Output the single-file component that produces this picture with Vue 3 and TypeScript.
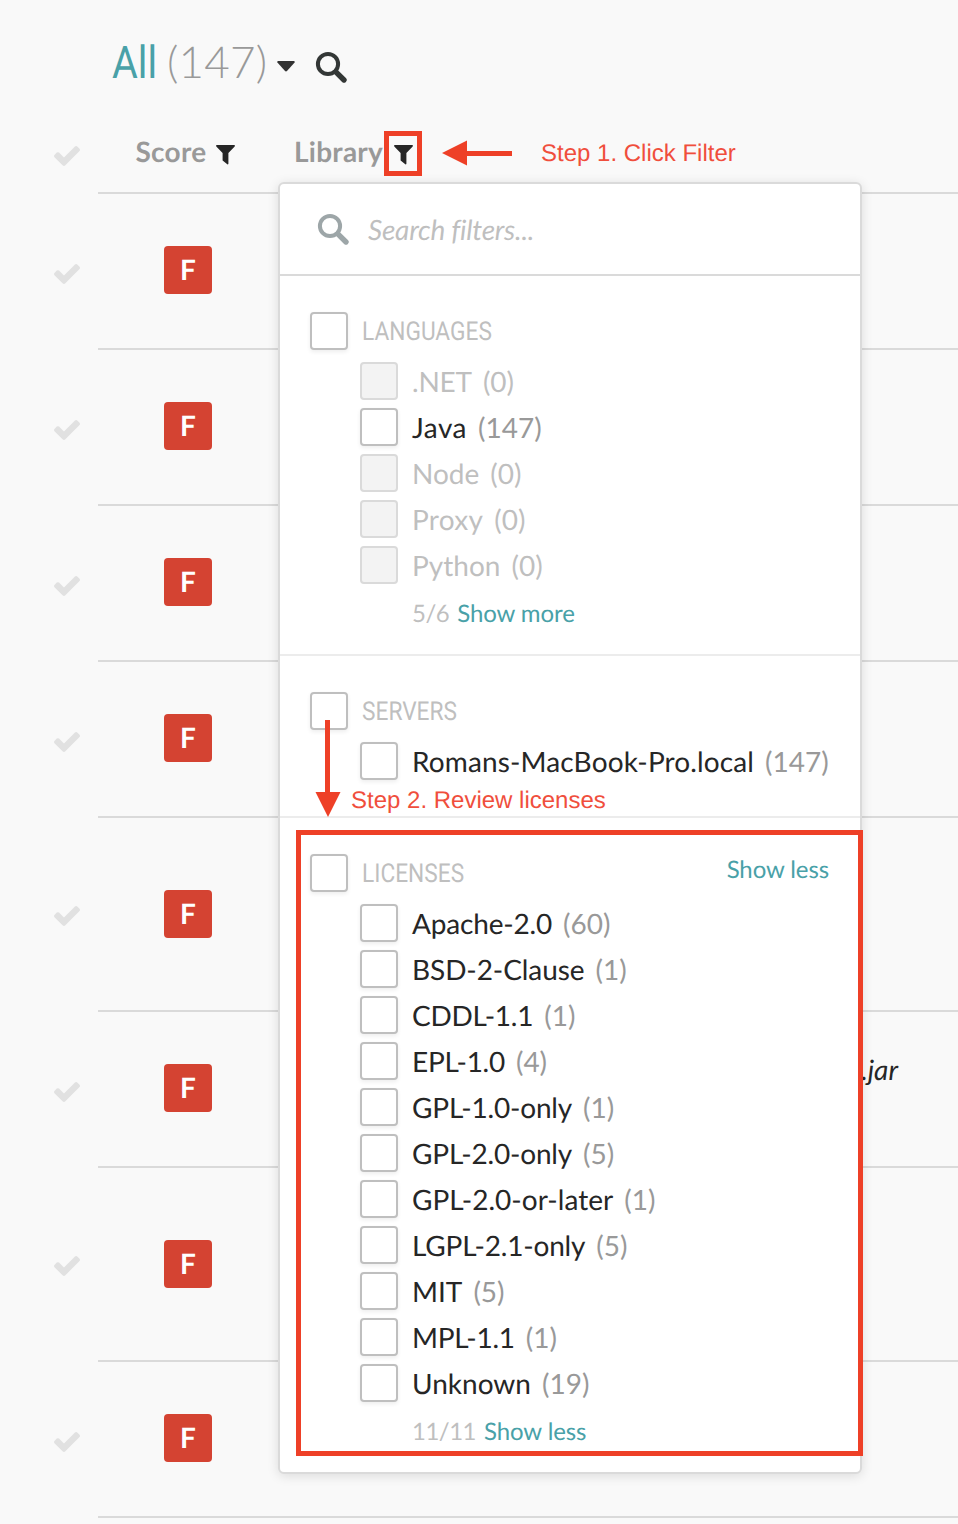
<script setup lang="ts">
interface FilterItem {
  name: string
  count: number
  tracking?: number
}
interface FilterGroup {
  title: string
  items: FilterItem[]
  tally?: string
  toggle?: string
  corner?: string
}
interface Row {
  grade: string
  tall: boolean
  file?: string
}

const groups: FilterGroup[] = [
  {
    title: 'LANGUAGES',
    items: [
      { name: '.NET', count: 0, tracking: -0.2 },
      { name: 'Java', count: 147, tracking: 0.5 },
      { name: 'Node', count: 0 },
      { name: 'Proxy', count: 0, tracking: 0.3 },
      { name: 'Python', count: 0 },
    ],
    tally: '5/6',
    toggle: 'Show more',
  },
  { title: 'SERVERS', items: [{ name: 'Romans-MacBook-Pro.local', count: 147, tracking: 0.13 }] },
  {
    title: 'LICENSES',
    items: [
      { name: 'Apache-2.0', count: 60, tracking: -0.17 },
      { name: 'BSD-2-Clause', count: 1, tracking: -0.08 },
      { name: 'CDDL-1.1', count: 1, tracking: -0.25 },
      { name: 'EPL-1.0', count: 4, tracking: -0.28 },
      { name: 'GPL-1.0-only', count: 1, tracking: -0.17 },
      { name: 'GPL-2.0-only', count: 5, tracking: -0.17 },
      { name: 'GPL-2.0-or-later', count: 1, tracking: 0.03 },
      { name: 'LGPL-2.1-only', count: 5, tracking: -0.17 },
      { name: 'MIT', count: 5 },
      { name: 'MPL-1.1', count: 1, tracking: -0.28 },
      { name: 'Unknown', count: 19 },
    ],
    tally: '11/11',
    toggle: 'Show less',
    corner: 'Show less',
  },
]

const rows: Row[] = [
  { grade: 'F', tall: false },
  { grade: 'F', tall: false },
  { grade: 'F', tall: false },
  { grade: 'F', tall: false },
  { grade: 'F', tall: true },
  { grade: 'F', tall: false, file: '.jar' },
  { grade: 'F', tall: true },
  { grade: 'F', tall: false },
]
</script>

<template>
  <div class="page">
    <header class="title">
      <span class="title-name"><span class="squeeze">All</span></span>
      <span class="title-count">(147)</span>
      <svg class="caret" viewBox="0 0 18 11"><path d="M1 0h16q1.4.5.6 1.6l-7.4 8.2q-1.2 1.2-2.4 0L.4 1.6Q-.4.5 1 0z" /></svg>
      <svg class="glass" viewBox="0 0 31 31">
        <circle cx="12" cy="12" r="10.1" />
        <path d="M19.8 19.8L28 28" />
      </svg>
    </header>

    <div class="columns">
      <svg class="tick" viewBox="121 270 1550 1252"><path d="M1671 566q0 40-28 68l-724 724-136 136q-28 28-68 28t-68-28l-136-136-362-362q-28-28-28-68t28-68l136-136q28-28 68-28t68 28l294 295 656-657q28-28 68-28t68 28l136 136q28 28 28 68z" /></svg>
      <div class="columns-line">
        <span class="col-name score">Score</span>
        <svg class="funnel" viewBox="0 0 19 20"><path d="M.6 0h17.8q.9.5.3 1.4L12.4 8v10.8q-.3.9-1.1.5L6.6 15.6V8L.3 1.4Q-.3.5.6 0z" /></svg>
        <span class="col-name library">Library</span>
        <svg class="funnel second" viewBox="0 0 19 20"><path d="M.6 0h17.8q.9.5.3 1.4L12.4 8v10.8q-.3.9-1.1.5L6.6 15.6V8L.3 1.4Q-.3.5.6 0z" /></svg>
      </div>
    </div>

    <div v-for="(row, i) in rows" :key="i" class="row" :class="{ tall: row.tall }">
      <svg class="tick" viewBox="121 270 1550 1252"><path d="M1671 566q0 40-28 68l-724 724-136 136q-28 28-68 28t-68-28l-136-136-362-362q-28-28-28-68t28-68l136-136q28-28 68-28t68 28l294 295 656-657q28-28 68-28t68 28l136 136q28 28 28 68z" /></svg>
      <div class="row-body">
        <span class="grade">{{ row.grade }}</span>
        <span v-if="row.file" class="file">{{ row.file }}</span>
      </div>
    </div>

    <section class="panel">
      <div class="search">
        <svg class="glass" viewBox="0 0 31 31">
          <circle cx="12" cy="12" r="10.1" />
          <path d="M19.8 19.8L28 28" />
        </svg>
        <span class="placeholder">Search filters...</span>
      </div>
      <div v-for="g in groups" :key="g.title" class="group">
        <div class="group-head">
          <span class="box"></span>
          <span class="group-title">{{ g.title }}</span>
          <a v-if="g.corner" class="link corner">{{ g.corner }}</a>
        </div>
        <div class="items">
          <div v-for="item in g.items" :key="item.name" class="item" :class="{ off: item.count === 0 }">
            <span class="box"></span>
            <span class="name" :style="{ letterSpacing: (item.tracking ?? 0) + 'px' }">{{ item.name }}</span>
            <span class="count">({{ item.count }})</span>
          </div>
        </div>
        <div v-if="g.tally" class="more">
          <span class="tally">{{ g.tally }}</span>
          <a class="link">{{ g.toggle }}</a>
        </div>
      </div>
    </section>

    <div class="mark mark-filter"></div>
    <div class="mark mark-licenses"></div>
    <svg class="arrow arrow-left" viewBox="0 0 70 26"><path d="M0 13L25 .5V11H70V16H25V25.5z" /></svg>
    <svg class="arrow arrow-down" viewBox="0 0 26 97"><path d="M13 97L.5 72H10V0H15V72H25.5z" /></svg>
    <span class="note note-one">Step 1. Click Filter</span>
    <span class="note note-two">Step 2. Review licenses</span>
  </div>
</template>

<style>
body {
  margin: 0;
  background: #f9f9f9;
}
</style>

<style scoped>
.page {
  position: relative;
  width: 958px;
  height: 1524px;
  overflow: hidden;
  background: #f9f9f9;
  font-family: Lato, "Liberation Sans", sans-serif;
  font-size: 28px;
  color: #262626;
  white-space: nowrap;
  text-rendering: geometricPrecision;
}
.page * {
  box-sizing: border-box;
}
svg {
  display: block;
  flex: none;
  overflow: visible;
}
.title {
  display: flex;
  align-items: center;
  height: 118px;
  padding: 8px 0 0 112px;
}
.title-name {
  width: 55px;
  font: 400 45px/54px Roboto, sans-serif;
  color: #49a1a8;
}
.squeeze {
  display: inline-block;
  transform: scaleX(0.88);
  transform-origin: 0 50%;
}
.title-count {
  width: 110px;
  margin-top: -2px;
  font-size: 44px;
  line-height: 54px;
  font-weight: 300;
  letter-spacing: 0.2px;
  color: #999;
}
.caret {
  width: 18px;
  height: 11px;
  margin-top: 7px;
  fill: #333;
}
.glass {
  width: 31px;
  height: 31px;
  fill: none;
  stroke: #333736;
  stroke-width: 4;
}
.glass path {
  stroke-width: 5.4;
  stroke-linecap: round;
}
.title .glass {
  margin: 9px 0 0 21px;
}
.tick {
  width: 26px;
  height: 21px;
  fill: #e1e1e1;
}
.columns {
  display: flex;
  height: 76px;
  padding-left: 54px;
}
.columns .tick {
  margin-top: 27px;
}
.columns-line {
  display: flex;
  align-items: center;
  width: 860px;
  margin-left: 18px;
  padding-bottom: 4px;
  border-bottom: 2px solid #dadada;
}
.col-name {
  margin-top: -5px;
  font-weight: 700;
  letter-spacing: 0.27px;
  color: #999;
}
.score {
  padding-left: 37.5px;
  width: 118px;
}
.library {
  width: 100px;
  margin-left: 59px;
}
.funnel {
  width: 19px;
  height: 20px;
  margin-top: 3px;
  fill: #262626;
}
.row {
  display: flex;
  height: 156px;
  padding-left: 54px;
}
.row .tick {
  margin-top: 69px;
}
.row-body {
  display: flex;
  justify-content: space-between;
  width: 860px;
  margin-left: 18px;
  padding: 52px 60px 0 66px;
  border-bottom: 2px solid #dadada;
}
.row.tall {
  height: 194px;
}
.tall .tick {
  margin-top: 87px;
}
.tall .row-body {
  padding-top: 72px;
}
.grade {
  width: 48px;
  height: 48px;
  border-radius: 4px;
  background: #d44332;
  color: #fff;
  font-weight: 700;
  line-height: 47px;
  text-align: center;
}
.file {
  margin-top: -12px;
  line-height: 34px;
  font-style: italic;
}
.panel {
  position: absolute;
  left: 278px;
  top: 182px;
  width: 584px;
  height: 1292px;
  border: 2px solid #dadada;
  border-radius: 6px;
  background: #fff;
  box-shadow: 0 2px 12px rgba(0, 0, 0, 0.12);
}
.search {
  display: flex;
  align-items: center;
  height: 92px;
  padding-left: 38px;
  border-bottom: 2px solid #dadada;
}
.search .glass {
  stroke: #9da6a8;
}
.placeholder {
  margin: 0 0 0 19px;
  font-style: italic;
  letter-spacing: -0.24px;
  font-variant-ligatures: common-ligatures;
  color: #bfbfbf;
}
.group {
  padding: 36px 31px 16px 30px;
  border-bottom: 2px solid #ececec;
}
.group:nth-child(3) {
  padding-bottom: 32px;
}
.group:last-child {
  border-bottom: 0;
}
.group-head {
  display: flex;
  align-items: center;
  height: 38px;
  margin-bottom: 8px;
}
.group-title {
  margin: 2px 0 0 14px;
  font: 400 26px/38px Roboto, sans-serif;
  color: #bfbfbf;
  transform: scaleX(0.873);
  transform-origin: 0 50%;
}
.box {
  flex: none;
  width: 38px;
  height: 38px;
  border: 2px solid #bfbfbf;
  border-radius: 4px;
  background: #fff;
  box-shadow: 0 2px 4px rgba(0, 0, 0, 0.07);
}
.items {
  padding-left: 50px;
}
.item {
  display: flex;
  align-items: center;
  height: 46px;
}
.name,
.count {
  line-height: 34px;
}
.name {
  margin-left: 14px;
}
.count {
  margin-left: 11px;
  color: #999;
}
.off .box {
  border-color: #dadada;
  background: #f3f3f3;
  box-shadow: none;
}
.off .name,
.off .count {
  color: #bfbfbf;
}
.more {
  display: flex;
  align-items: center;
  height: 50px;
  padding: 0 0 0 102px;
  font-size: 24px;
}
.tally {
  margin-right: 8px;
  letter-spacing: -0.5px;
  color: #bfbfbf;
}
.link {
  font-size: 24px;
  letter-spacing: -0.1px;
  color: #49a1a8;
}
.corner {
  margin: -7px 0 0 auto;
}
.mark {
  position: absolute;
  border: 5px solid #ee4027;
}
.mark-filter {
  left: 384px;
  top: 131px;
  width: 38px;
  height: 45px;
}
.mark-licenses {
  left: 296px;
  top: 830px;
  width: 567px;
  height: 626px;
}
.arrow {
  position: absolute;
  fill: #ee4027;
}
.arrow-left {
  left: 442px;
  top: 140px;
  width: 70px;
  height: 26px;
}
.arrow-down {
  left: 315px;
  top: 720px;
  width: 26px;
  height: 97px;
}
.note {
  position: absolute;
  font: 24px/28px "Liberation Sans", Arial, sans-serif;
  color: #f04e3c;
}
.note-one {
  left: 541px;
  top: 140px;
}
.note-two {
  left: 351px;
  top: 787px;
}
</style>
